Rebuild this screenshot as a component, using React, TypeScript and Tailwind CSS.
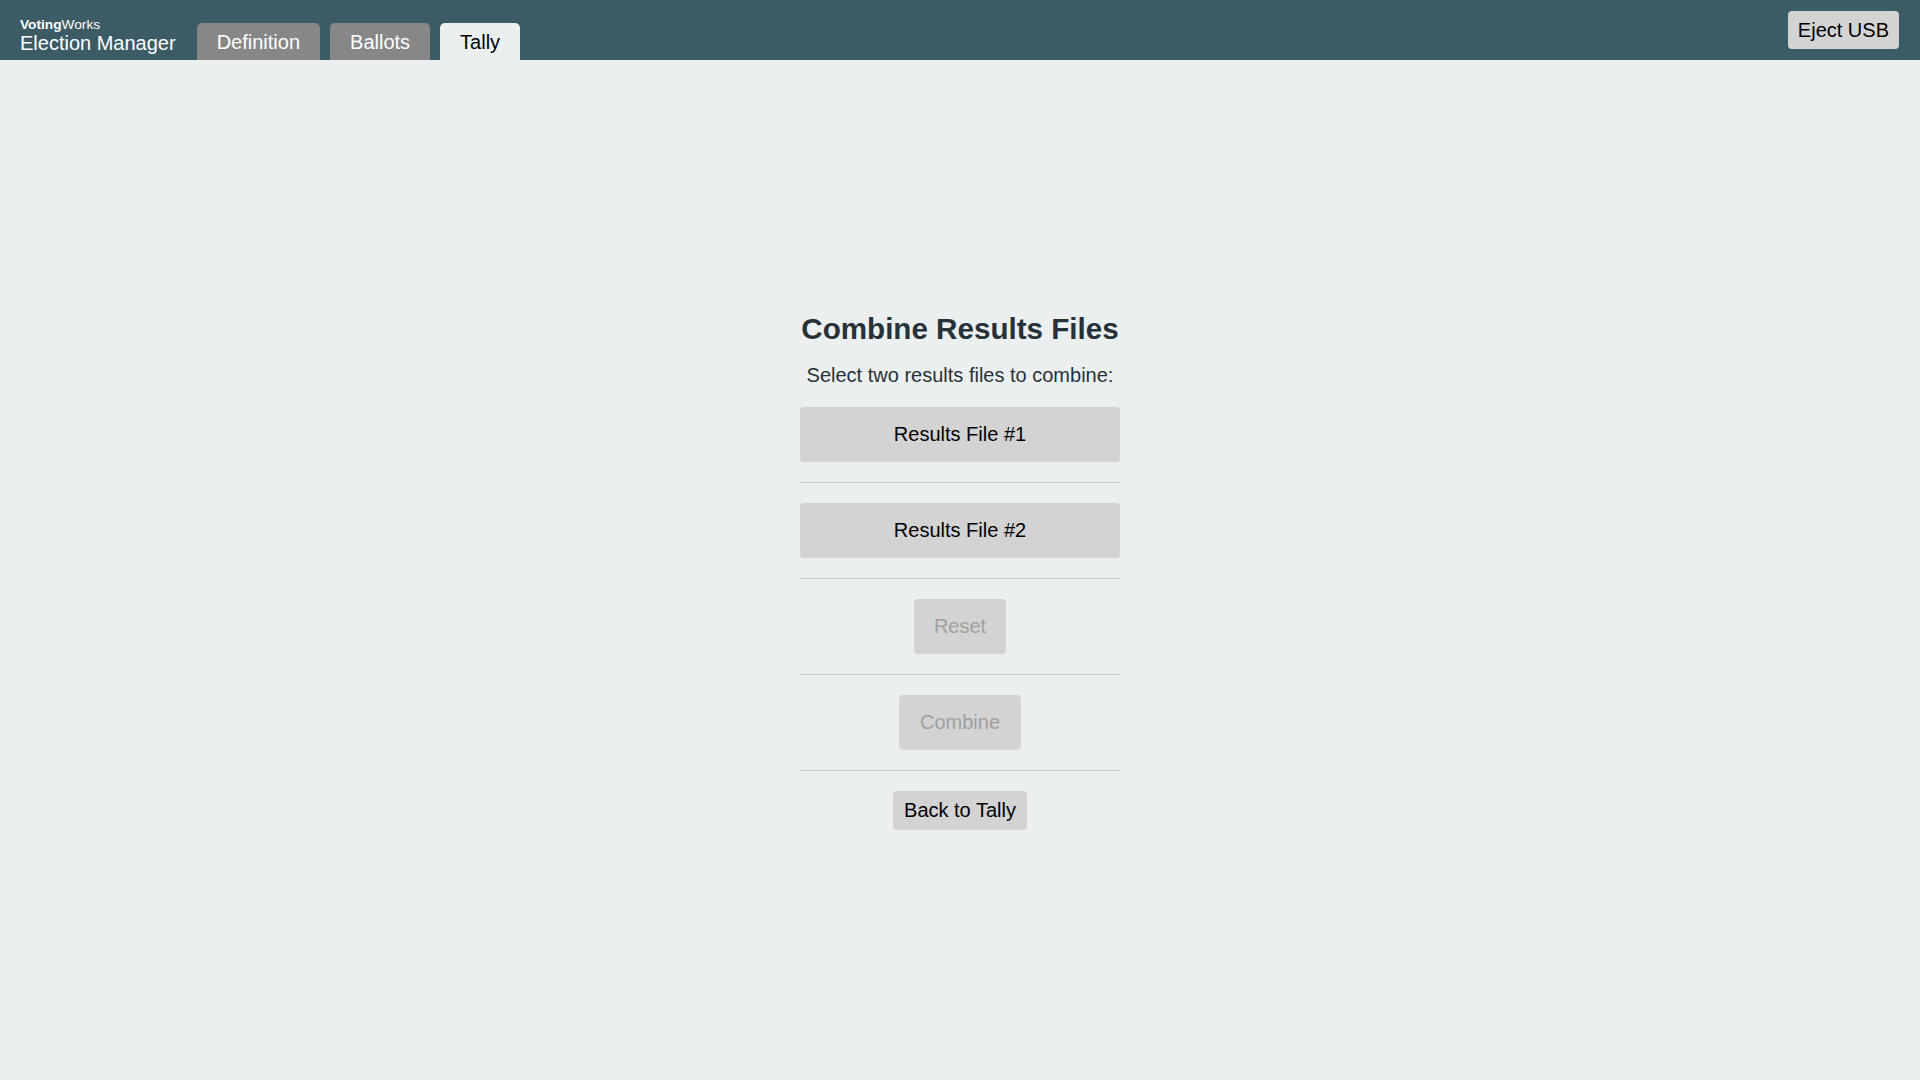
import React from "react";

const font = { fontFamily: '"Liberation Sans", Arial, Helvetica, sans-serif' };

export default function App() {
  return (
    <div className="w-[1920px] h-[1080px] flex flex-col bg-[#ebeff0]" style={font}>
      <header className="h-[60px] bg-[#3b5b65] flex items-end justify-between pl-[20px] pr-[21px]">
        <div className="flex items-end h-full">
          <div className="flex flex-col text-white pb-[7px] mr-[21px]">
            <div className="text-[13.7px] leading-[16px]">
              <span className="font-bold">Voting</span>Works
            </div>
            <div className="text-[20px] leading-[20px]">Election Manager</div>
          </div>
          <div className="flex items-end gap-[10px]">
            <div className="h-[37px] px-[20px] flex items-center rounded-t-[5px] bg-[#878787] text-white text-[20px]">
              Definition
            </div>
            <div className="h-[37px] px-[20px] flex items-center rounded-t-[5px] bg-[#878787] text-white text-[20px]">
              Ballots
            </div>
            <div className="h-[37px] px-[20px] flex items-center rounded-t-[5px] bg-[#ebeff0] text-black text-[20px]">
              Tally
            </div>
          </div>
        </div>
        <div className="self-start mt-[11px] h-[38px] px-[10px] flex items-center rounded-[4px] bg-[#d3d3d3] text-black text-[20px]">
          Eject USB
        </div>
      </header>
      <main className="flex-1 flex items-center justify-center">
        <div className="w-[320px] flex flex-col items-center">
          <h1 className="text-[29.6px] leading-[36px] font-bold text-[#263238] whitespace-nowrap">
            Combine Results Files
          </h1>
          <p className="mt-[16px] text-[20px] leading-[24px] text-[#263238] whitespace-nowrap">
            Select two results files to combine:
          </p>
          <button className="mt-[20px] w-full h-[55px] rounded-[4px] bg-[#d3d3d3] text-black text-[20px]">
            Results File #1
          </button>
          <hr className="w-full my-[20px] border-0 border-t border-[#c5c8c9]" />
          <button className="w-full h-[55px] rounded-[4px] bg-[#d3d3d3] text-black text-[20px]">
            Results File #2
          </button>
          <hr className="w-full my-[20px] border-0 border-t border-[#c5c8c9]" />
          <button className="h-[55px] px-[20px] rounded-[4px] bg-[#d3d3d3] text-[#a0a0a0] text-[20px]">
            Reset
          </button>
          <hr className="w-full my-[20px] border-0 border-t border-[#c5c8c9]" />
          <button className="h-[55px] px-[21px] rounded-[4px] bg-[#d3d3d3] text-[#a0a0a0] text-[20px]">
            Combine
          </button>
          <hr className="w-full my-[20px] border-0 border-t border-[#c5c8c9]" />
          <button className="h-[39px] px-[11px] rounded-[4px] bg-[#d3d3d3] text-black text-[20px]">
            Back to Tally
          </button>
        </div>
      </main>
    </div>
  );
}
